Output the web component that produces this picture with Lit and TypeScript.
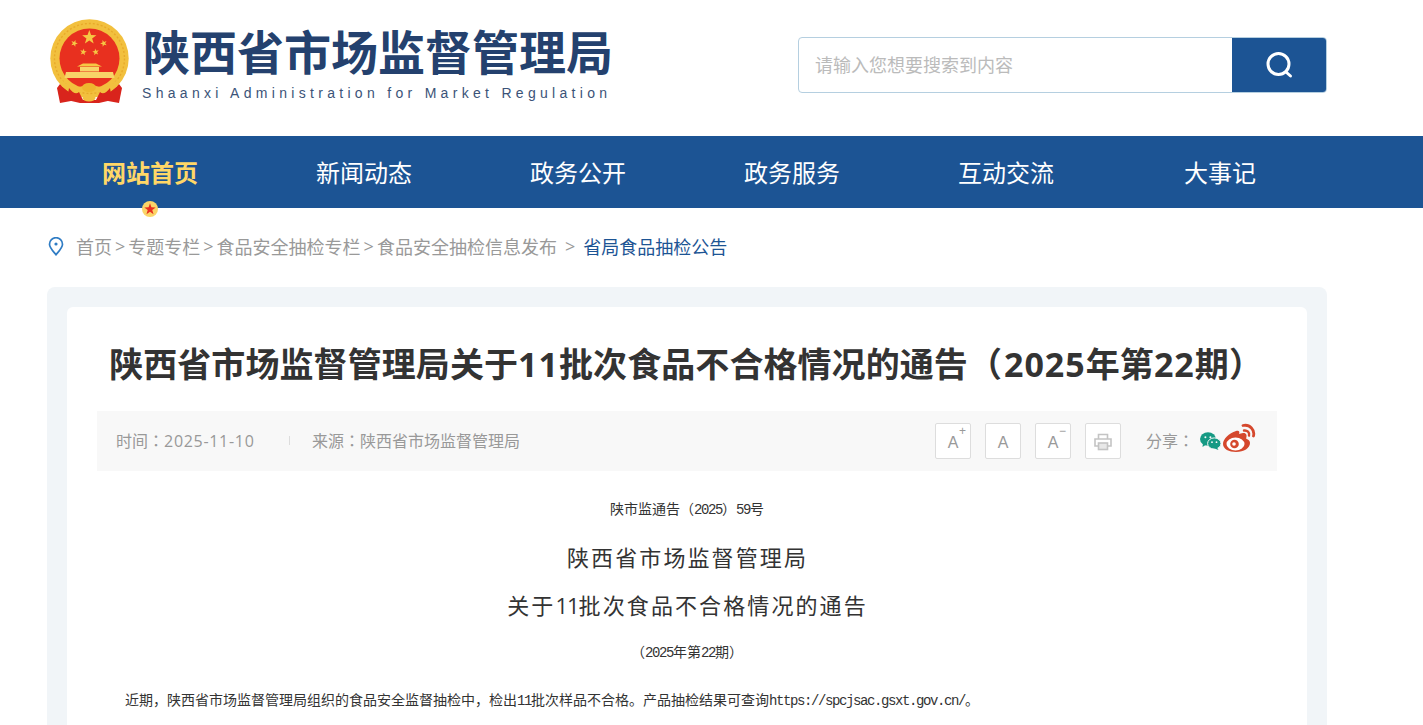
import { LitElement, html, css, svg } from "lit";
import { customElement } from "lit/decorators.js";

const star = (cx: number, cy: number, r: number, fill: string, rot = 0) => {
  const pts: string[] = [];
  for (let i = 0; i < 10; i++) {
    const a = ((-90 + rot + i * 36) * Math.PI) / 180;
    const q = i % 2 ? r * 0.4 : r;
    pts.push(`${(cx + q * Math.cos(a)).toFixed(2)},${(cy + q * Math.sin(a)).toFixed(2)}`);
  }
  return svg`<polygon points=${pts.join(" ")} fill=${fill}></polygon>`;
};

const NAV = ["网站首页", "新闻动态", "政务公开", "政务服务", "互动交流", "大事记"];

@customElement("app-root")
export class AppRoot extends LitElement {
  static styles = css`
    :host {
      display: block;
      height: 725px;
      overflow: hidden;
      background: #fff;
      font-family: "Open Sans", "Noto Sans CJK SC", sans-serif;
      color: #333;
      text-spacing-trim: space-all;
    }
    .tc { font-family: "Noto Sans CJK TC", sans-serif; }
    .head {
      height: 136px;
      display: flex;
      align-items: flex-start;
      box-sizing: border-box;
      padding: 19px 0 0 50px;
    }
    .logo { display: flex; }
    .emblem { width: 82px; height: 86px; display: block; }
    .brand { margin: 0 0 0 10px; width: 480px; }
    .brand-cn {
      font-size: 47px;
      line-height: 66px;
      font-weight: 700;
      color: #24416e;
      white-space: nowrap;
      margin-left: 1px;
    }
    .brand-en {
      font-family: "Liberation Sans", sans-serif;
      font-size: 14px;
      line-height: 16px;
      letter-spacing: 4.3px;
      color: #3b5378;
      white-space: nowrap;
    }
    .search {
      margin: 18px 0 0 176px;
      width: 529px;
      height: 56px;
      box-sizing: border-box;
      border: 1px solid #b5cfe0;
      border-radius: 4px;
      display: flex;
      overflow: hidden;
    }
    .ph {
      flex: 1;
      padding-left: 16px;
      font-size: 18px;
      line-height: 54px;
      color: #bbb;
    }
    .sbtn {
      width: 94px;
      background: #1c5494;
      display: flex;
      align-items: center;
      justify-content: center;
    }
    .nav {
      height: 72px;
      background: #1c5494;
      display: flex;
      padding-left: 43px;
    }
    .nav-item {
      width: 214px;
      text-align: center;
      color: #fff;
      font-size: 24px;
      line-height: 74px;
      position: relative;
    }
    .nav-item.on { color: #ffd767; font-weight: 700; }
    .dot {
      position: absolute;
      left: 99px;
      top: 65px;
      width: 16px;
      height: 16px;
      display: block;
    }
    .crumb {
      display: flex;
      align-items: center;
      height: 79px;
      box-sizing: border-box;
      padding: 0 0 4px 48px;
      font-size: 18px;
      color: #999;
      white-space: nowrap;
    }
    .crumb svg { width: 16px; height: 19px; margin: 2px 12px 0 0; flex: none; }
    .sep { margin: 0 3px; }
    .sep.last { margin: 0 8px; }
    .crumb .cur { color: #1c5494; }
    .panel {
      margin-left: 47px;
      width: 1280px;
      box-sizing: border-box;
      background: #f1f5f8;
      border-radius: 8px;
      padding: 20px 20px 0;
    }
    .card {
      background: #fff;
      border-radius: 6px;
      padding: 28px 30px 60px;
      height: 500px;
    }
    h1 {
      margin: 0;
      height: 56px;
      font-size: 34px;
      line-height: 56px;
      font-weight: 700;
      letter-spacing: 0.08px;
      color: #333;
      text-align: center;
      white-space: nowrap;
    }
    h1 .tc { letter-spacing: 2px; }
    .d { letter-spacing: 1px; }
    .meta {
      margin-top: 20px;
      height: 60px;
      box-sizing: border-box;
      padding: 0 0 2px 19px;
      background: #f8f8f8;
      display: flex;
      align-items: center;
      font-size: 16px;
      color: #999;
    }
    .time { width: 173px; }
    .date { letter-spacing: 0.7px; }
    .div { width: 1px; height: 9px; background: #ddd; margin-right: 22px; }
    .src { flex: 1; }
    .tools { display: flex; gap: 14px; margin-top: 2px; }
    .tool {
      width: 36px;
      height: 36px;
      box-sizing: border-box;
      border: 1px solid #ddd;
      border-radius: 2px;
      background: #fff;
      position: relative;
      display: flex;
      align-items: center;
      justify-content: center;
      padding-top: 3px;
      font-family: "Liberation Sans", sans-serif;
      font-size: 16px;
      color: #999;
    }
    .tool svg { margin-top: -2px; }
    .tool sup {
      position: absolute;
      right: 4px;
      top: 1px;
      font-size: 12px;
      line-height: 12px;
    }
    .share { margin-left: 25px; display: flex; align-items: center; width: 131px; }
    .share span { width: 54px; }
    .wx { width: 21px; height: 18px; margin-top: 1px; display: block; }
    .wb { width: 35px; height: 30px; margin: -4px 0 0 1px; display: block; }
    .body {
      font-family: "Noto Sans CJK SC", sans-serif;
      color: #333;
      font-size: 14px;
    }
    .body p { margin: 0; }
    .c { text-align: center; }
    .m { font-family: "Liberation Mono", monospace; letter-spacing: -1.4px; }
    .body .no { margin-top: 27px; line-height: 20px; height: 20px; }
    .t1, .t2 {
      font-size: 22px;
      letter-spacing: 2.1px;
      line-height: 48px;
      height: 48px;
      color: #333;
      padding-left: 1px;
    }
    .body .t1 { margin-top: 14px; }
    .t2 .n { font-family: "Open Sans", sans-serif; letter-spacing: -1px; }
    .body .no2 { margin-top: 13px; line-height: 20px; height: 20px; }
    .body .lead { margin-top: 28px; padding-left: 28px; line-height: 20px; white-space: nowrap; }
  `;

  render() {
    return html`
      <div class="head">
        <div class="logo">
          <svg class="emblem" viewBox="51 19 82 86">
            <path d="M61 84 L58 88 L61 103 L72 101 L78 92 Z" fill="#d9241c"></path>
            <path d="M120 84 L123 88 L120 103 L109 101 L103 92 Z" fill="#d9241c"></path>
            <circle cx="90.5" cy="58.5" r="39.2" fill="#f2c03e"></circle>
            <circle cx="90.5" cy="58.5" r="35" fill="none" stroke="#e8a92a" stroke-width="1.4" stroke-dasharray="2 2"></circle>
            <circle cx="90.5" cy="58.5" r="30" fill="#e8301f"></circle>
            ${star(90.3, 37.5, 7.5, "#f6c744")}
            ${star(75.3, 43.3, 3.6, "#f6c744", 20)}
            ${star(104.7, 43.3, 3.6, "#f6c744", -20)}
            ${star(84.3, 52, 3.5, "#f6c744", 10)}
            ${star(96.7, 52, 3.5, "#f6c744", -10)}
            <path d="M84 63.5 H97 L103 66.5 H78 Z" fill="#f6c744"></path>
            <rect x="81" y="67" width="19" height="4.5" fill="#f8d468"></rect>
            <path d="M67 72 H114 L115.5 78 H65.5 Z" fill="#f8d468"></path>
            <path d="M62 79 Q72 90 84 86 Q90 83 97 86 Q109 90 119 79 L121 82 Q112 96 97 92 H84 Q69 96 60 82 Z" fill="#f2c03e"></path>
            <path d="M70 88 Q76 96 80 92 L84 100 H97 L101 92 Q105 96 111 88 L113 100 L100 103 H81 L68 100 Z" fill="#d9241c"></path>
            <ellipse cx="90" cy="87.5" rx="7" ry="4.5" fill="#eeb72f"></ellipse>
            <ellipse cx="90" cy="98" rx="6.5" ry="3.5" fill="#f2c03e"></ellipse>
          </svg>
          <div class="brand">
            <div class="brand-cn">陕西省市场监督管理局</div>
            <div class="brand-en">Shaanxi Administration for Market Regulation</div>
          </div>
        </div>
        <div class="search">
          <div class="ph">请输入您想要搜索到内容</div>
          <div class="sbtn">
            <svg width="28" height="28" viewBox="0 0 28 28" fill="none" stroke="#fff" stroke-width="3" stroke-linecap="round">
              <circle cx="13.5" cy="13" r="10.5"></circle>
              <path d="M21 21 L25.5 25"></path>
            </svg>
          </div>
        </div>
      </div>
      <div class="nav">
        ${NAV.map(
          (n, i) => html`<div class="nav-item ${i === 0 ? "on" : ""}">
            ${n}
            ${i === 0
              ? html`<svg class="dot" viewBox="0 0 16 16">
                  <circle cx="8" cy="8" r="8" fill="#fbd568"></circle>
                  ${star(8, 8.3, 6, "#e8301f")}
                </svg>`
              : ""}
          </div>`
        )}
      </div>
      <div class="crumb">
        <svg viewBox="0 0 16 19" fill="none" stroke="#2f7cc4" stroke-width="1.7">
          <path d="M8 17.8 C4.5 13.5 1.5 10.5 1.5 7.2 A6.5 6.5 0 0 1 14.5 7.2 C14.5 10.5 11.5 13.5 8 17.8 Z"></path>
          <circle cx="8" cy="7" r="1.6" fill="#2f7cc4" stroke="none"></circle>
        </svg>
        <span>首页</span><span class="sep">&gt;</span><span>专题专栏</span><span class="sep">&gt;</span><span>食品安全抽检专栏</span><span class="sep">&gt;</span><span>食品安全抽检信息发布</span><span class="sep last">&gt;</span><span class="cur">省局食品抽检公告</span>
      </div>
      <div class="panel">
        <div class="card">
          <h1>陕西省市场监督管理局关于<span class="d">11</span>批次食品不合格情况的通告<span class="tc">（</span><span class="d">2025</span>年第<span class="d">22</span>期<span class="tc">）</span></h1>
          <div class="meta">
            <div class="time">时间<span class="tc">：</span><span class="date">2025-11-10</span></div>
            <div class="div"></div>
            <div class="src">来源<span class="tc">：</span>陕西省市场监督管理局</div>
            <div class="tools">
              <div class="tool">A<sup>+</sup></div>
              <div class="tool">A</div>
              <div class="tool">A<sup>−</sup></div>
              <div class="tool">
                <svg width="18" height="18" viewBox="0 0 18 18" fill="none" stroke="#c4c4c4" stroke-width="1.6">
                  <path d="M4.5 6 V1.5 H13.5 V6"></path>
                  <path d="M4.5 13 H1 V6 H17 V13 H13.5"></path>
                  <rect x="4.5" y="10" width="9" height="6.5" fill="#e8e8e8"></rect>
                </svg>
              </div>
            </div>
            <div class="share">
              <span>分享<span class="tc">：</span></span>
              <svg class="wx" viewBox="0 0 21 18">
                <ellipse cx="8" cy="7" rx="8" ry="6.8" fill="#169a84"></ellipse>
                <path d="M3 11 L2.5 15 L7 12 Z" fill="#169a84"></path>
                <ellipse cx="14.3" cy="11.5" rx="6.7" ry="5.6" fill="#169a84" stroke="#f8f8f8" stroke-width="1"></ellipse>
                <path d="M17 15.5 L18.5 18 L14.5 16.5 Z" fill="#169a84"></path>
                <circle cx="5.4" cy="5.2" r="1" fill="#f8f8f8"></circle>
                <circle cx="10.4" cy="5.2" r="1" fill="#f8f8f8"></circle>
                <circle cx="12" cy="10.2" r=".9" fill="#f8f8f8"></circle>
                <circle cx="16.5" cy="10.2" r=".9" fill="#f8f8f8"></circle>
              </svg>
              <svg class="wb" viewBox="0 0 35 30">
                <path d="M14 8 C7 10 1 16 1 21 C1 26 7 29 14 29 C22 29 28 25 28 20 C28 17 25.5 16.5 24 15.5 C25.5 12 24 9.5 21 10 C19.5 10.2 18 11 17 11 C18 8.5 17 7 14 8 Z" fill="#d5482d"></path>
                <ellipse cx="13.5" cy="21" rx="9" ry="6.5" fill="#fff"></ellipse>
                <circle cx="12.5" cy="21" r="4.3" fill="#d5482d"></circle>
                <circle cx="12" cy="21" r="1.8" fill="#fff"></circle>
                <path d="M21 2.5 C28 1 33 7 31.5 13" fill="none" stroke="#d5482d" stroke-width="2.8" stroke-linecap="round"></path>
                <path d="M22 7.5 C25 7 28 9.5 27 12.5" fill="none" stroke="#d5482d" stroke-width="2.4" stroke-linecap="round"></path>
              </svg>
            </div>
          </div>
          <div class="body">
            <p class="c no">陕市监通告<span class="tc">（</span><span class="m">2025</span><span class="tc">）</span><span class="m">59</span>号</p>
            <p class="c t1">陕西省市场监督管理局</p>
            <p class="c t2">关于<span class="n">11</span>批次食品不合格情况的通告</p>
            <p class="c no2"><span class="tc">（</span><span class="m">2025</span>年第<span class="m">22</span>期<span class="tc">）</span></p>
            <p class="lead">近期，陕西省市场监督管理局组织的食品安全监督抽检中，检出<span class="m">11</span>批次样品不合格。产品抽检结果可查询<span class="m">https://spcjsac.gsxt.gov.cn/</span>。</p>
          </div>
        </div>
      </div>
    `;
  }
}
